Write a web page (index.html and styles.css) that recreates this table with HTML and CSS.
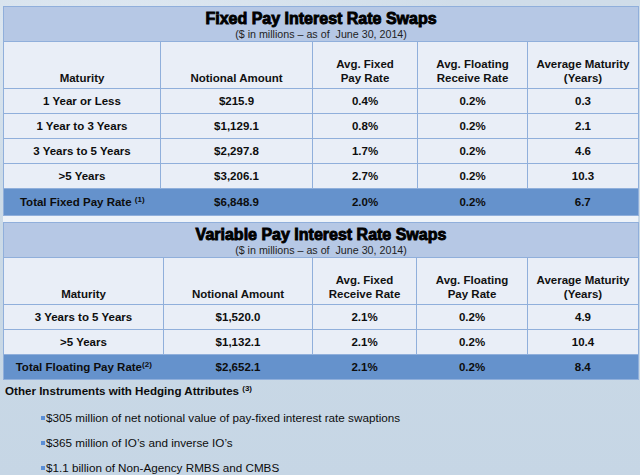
FILE: index.html
```html
<!DOCTYPE html>
<html>
<head>
<meta charset="utf-8">
<link rel="stylesheet" href="styles.css">
</head>
<body>
<div class="page">
  <div class="tables">
    <table class="swaps">
      <colgroup><col style="width:157px"><col style="width:152px"><col style="width:105px"><col style="width:110px"><col style="width:111px"></colgroup>
      <tr class="title-row"><th colspan="5"><div class="title">Fixed Pay Interest Rate Swaps</div><div class="subtitle">($ in millions – as of&nbsp; June 30, 2014)</div></th></tr>
      <tr class="head-row"><th>Maturity</th><th>Notional Amount</th><th>Avg. Fixed<br>Pay Rate</th><th>Avg. Floating<br>Receive Rate</th><th>Average Maturity<br>(Years)</th></tr>
      <tr class="data-row"><td>1 Year or Less</td><td>$215.9</td><td>0.4%</td><td>0.2%</td><td>0.3</td></tr>
      <tr class="data-row"><td>1 Year to 3 Years</td><td>$1,129.1</td><td>0.8%</td><td>0.2%</td><td>2.1</td></tr>
      <tr class="data-row"><td>3 Years to 5 Years</td><td>$2,297.8</td><td>1.7%</td><td>0.2%</td><td>4.6</td></tr>
      <tr class="data-row"><td>&gt;5 Years</td><td>$3,206.1</td><td>2.7%</td><td>0.2%</td><td>10.3</td></tr>
      <tr class="total-row t1"><td>Total Fixed Pay Rate <sup>(1)</sup></td><td>$6,848.9</td><td>2.0%</td><td>0.2%</td><td>6.7</td></tr>
    </table>
    <table class="swaps">
      <colgroup><col style="width:160px"><col style="width:149px"><col style="width:104px"><col style="width:111px"><col style="width:111px"></colgroup>
      <tr class="title-row"><th colspan="5"><div class="title">Variable Pay Interest Rate Swaps</div><div class="subtitle">($ in millions – as of&nbsp; June 30, 2014)</div></th></tr>
      <tr class="head-row"><th>Maturity</th><th>Notional Amount</th><th>Avg. Fixed<br>Receive Rate</th><th>Avg. Floating<br>Pay Rate</th><th>Average Maturity<br>(Years)</th></tr>
      <tr class="data-row"><td>3 Years to 5 Years</td><td>$1,520.0</td><td>2.1%</td><td>0.2%</td><td>4.9</td></tr>
      <tr class="data-row"><td>&gt;5 Years</td><td>$1,132.1</td><td>2.1%</td><td>0.2%</td><td>10.4</td></tr>
      <tr class="total-row t2"><td>Total Floating Pay Rate<sup>(2)</sup></td><td>$2,652.1</td><td>2.1%</td><td>0.2%</td><td>8.4</td></tr>
    </table>
  </div>
  <div class="other">
    <div class="other-title">Other Instruments with Hedging Attributes <sup>(3)</sup></div>
    <ul class="bullets">
      <li>$305 million of net notional value of pay-fixed interest rate swaptions</li>
      <li>$365 million of IO’s and inverse IO’s</li>
      <li>$1.1 billion of Non-Agency RMBS and CMBS</li>
    </ul>
  </div>
</div>
</body>
</html>
```

FILE: styles.css
```css
html, body {
  margin: 0;
  padding: 0;
}
body {
  width: 640px;
  height: 475px;
  overflow: hidden;
  font-family: "Liberation Sans", Arial, sans-serif;
  color: #0d0d0d;
  background:
    radial-gradient(ellipse 760px 140px at 760px 560px, #9fb7d7 0%, #a9c0dc 62%, rgba(169,192,220,0) 63%),
    radial-gradient(ellipse 500px 200px at 120px 40px, rgba(235,242,248,0.6), rgba(235,242,248,0) 70%),
    linear-gradient(180deg, #d0dde9 0%, #cad9e6 60%, #c6d6e5 100%);
}
.page {
  padding: 6px 2px 0 3px;
}
.tables {
  display: flex;
  flex-direction: column;
  gap: 6px;
  background: #eef3f9;
}
.swaps {
  width: 635px;
  table-layout: fixed;
  border-collapse: collapse;
  font-size: 11.5px;
  font-weight: bold;
}
.swaps th, .swaps td {
  border: 1px solid #90afdb;
  text-align: center;
  padding: 0;
}
.title-row th {
  background: #b6c8e5;
  height: 34px;
  vertical-align: top;
  font-weight: normal;
}
.title {
  font-size: 16px;
  font-weight: bold;
  line-height: 18px;
  padding-top: 3px;
  color: #000;
  -webkit-text-stroke: 0.9px #000;
}
.subtitle {
  font-size: 10.7px;
  line-height: 12px;
  color: #1e1e1e;
}
.head-row th {
  background: #e9eef7;
  height: 43px;
  vertical-align: bottom;
  line-height: 14px;
  padding-bottom: 3px;
  color: #111;
}
.data-row td {
  background: #e9eef7;
  height: 24px;
}
.total-row td {
  background: #6592cc;
  border-left: none;
  border-right: none;
  height: 26px;
}
.total-row.t2 td {
  height: 24px;
}
.total-row td:first-child {
  border-left: 1px solid #90afdb;
}
.total-row td:last-child {
  border-right: 1px solid #90afdb;
}
sup {
  font-size: 8px;
  vertical-align: 4px;
  line-height: 0;
}
.other {
  padding-left: 2px;
}
.other-title {
  font-size: 11.6px;
  font-weight: bold;
  line-height: 20px;
  margin-top: 1px;
}
.bullets {
  list-style: none;
  margin: 0;
  padding: 4px 0 0 36px;
  font-size: 11.7px;
}
.bullets li {
  height: 25px;
  line-height: 25px;
  display: flex;
  align-items: center;
}
.bullets li::before {
  content: "";
  width: 4px;
  height: 4px;
  background: #5b8fd6;
  margin-right: 1px;
}
```
